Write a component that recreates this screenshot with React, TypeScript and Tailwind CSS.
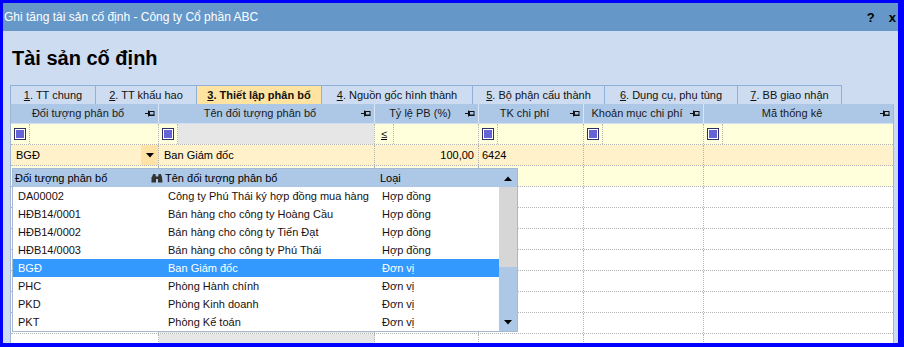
import React from "react";

const F = "font-['Liberation_Sans',Arial,sans-serif]";
const COLS = "grid grid-cols-[148px_216px_104px_105px_120px_189px]";

function Pin() {
  return (
    <svg width="10" height="7" viewBox="0 0 10 7" className="shrink-0">
      <path d="M0 3.5H3.5M3.5 0.5V6.5" stroke="#111" strokeWidth="1" />
      <rect x="4.5" y="1.5" width="4.5" height="3.5" fill="none" stroke="#111" strokeWidth="1" />
      <path d="M4 5.5H9.5" stroke="#111" strokeWidth="1" />
    </svg>
  );
}

function Check() {
  return (
    <div className="w-[12px] h-[12px] border border-[#2f2f66] bg-white p-[1px]">
      <div className="w-full h-full bg-[#6464d6]" />
    </div>
  );
}

function TriDown() {
  return (
    <svg width="8" height="5" viewBox="0 0 8 5">
      <path d="M0 0H8L4 4.5Z" fill="#000" />
    </svg>
  );
}
function TriUp() {
  return (
    <svg width="8" height="5" viewBox="0 0 8 5">
      <path d="M0 5H8L4 0.5Z" fill="#000" />
    </svg>
  );
}

function Binoculars() {
  return (
    <svg width="12" height="10" viewBox="0 0 12 10">
      <path d="M1 4L2.2 1H4.3L5 4V9.5H0.5V4Z" fill="#333" />
      <path d="M7 4L7.7 1H9.8L11 4L11.5 9.5H7Z" fill="#333" />
      <rect x="4.5" y="3.5" width="3" height="2.5" fill="#333" />
    </svg>
  );
}

const headers = [
  "Đối tượng phân bổ",
  "Tên đối tượng phân bổ",
  "Tỷ lệ PB (%)",
  "TK chi phí",
  "Khoản mục chi phí",
  "Mã thống kê",
];

const tabs: { n: string; t: string; w: string; active?: boolean }[] = [
  { n: "1", t: ". TT chung", w: "w-[85px]" },
  { n: "2", t: ". TT khấu hao", w: "w-[101px]" },
  { n: "3", t: ". Thiết lập phân bổ", w: "w-[125px]", active: true },
  { n: "4", t: ". Nguồn gốc hình thành", w: "w-[151px]" },
  { n: "5", t: ". Bộ phận cấu thành", w: "w-[132px]" },
  { n: "6", t: ". Dụng cụ, phụ tùng", w: "w-[133px]" },
  { n: "7", t: ". BB giao nhận", w: "w-[105px]" },
];

const items = [
  ["DA00002", "Công ty Phú Thái ký hợp đồng mua hàng", "Hợp đồng"],
  ["HĐB14/0001", "Bán hàng cho công ty Hoàng Cầu", "Hợp đồng"],
  ["HĐB14/0002", "Bán hàng cho công ty Tiến Đạt", "Hợp đồng"],
  ["HĐB14/0003", "Bán hàng cho công ty Phú Thái", "Hợp đồng"],
  ["BGĐ", "Ban Giám đốc", "Đơn vị"],
  ["PHC", "Phòng Hành chính", "Đơn vị"],
  ["PKD", "Phòng Kinh doanh", "Đơn vị"],
  ["PKT", "Phòng Kế toán", "Đơn vị"],
];

const cellB = "border-r border-dotted border-[#b4b4b4]";

function EmptyRow({ yellow }: { yellow?: boolean }) {
  return (
    <div className={`${COLS} h-[21px] shrink-0 border-b border-dotted border-[#b4b4b4] ${yellow ? "bg-[#ffffdc]" : "bg-white"}`}>
      <div className={cellB} />
      <div className={`${cellB} ${yellow ? "" : "bg-[#e6e6e6]"}`} />
      <div className={cellB} />
      <div className={cellB} />
      <div className={cellB} />
      <div />
    </div>
  );
}

export default function App() {
  return (
    <div className={`${F} w-[904px] h-[347px] bg-[#0000ff] pt-[3px] pl-[3px] pr-[6px] pb-[4px] overflow-hidden`}>
      <div className="w-full h-full flex flex-col bg-[#cddcf0]">
        {/* Title bar */}
        <div className="h-[28px] shrink-0 bg-[#6598c9] flex items-center pl-[1px] pr-[2px]">
          <span className="text-[12px] text-white leading-none">
            Ghi tăng tài sản cố định - Công ty Cổ phần ABC
          </span>
          <span className="ml-auto text-[13px] font-bold text-black leading-none mr-[14px]">?</span>
          <span className="text-[13px] font-bold text-black leading-none">x</span>
        </div>

        {/* Heading */}
        <div className="h-[54px] shrink-0 pl-[9px] pt-[15px]">
          <h1 className="text-[20px] font-bold leading-[24px] text-black">Tài sản cố định</h1>
        </div>

        {/* Tabs */}
        <div className="h-[19px] shrink-0 ml-[7px] flex">
          {tabs.map((tb, i) => (
            <div
              key={tb.n}
              className={`${tb.w} h-full border-t border-l ${i === tabs.length - 1 ? "border-r" : ""} border-[#8fb0d8] flex items-center justify-center text-[11px] text-[#111] ${
                tb.active ? "bg-[#ffe3a0] font-bold" : "bg-[#cddcf0]"
              }`}
            >
              <span>
                <span className="underline">{tb.n}</span>
                {tb.t}
              </span>
            </div>
          ))}
        </div>

        {/* Grid */}
        <div className="relative ml-[7px] w-[884px] flex-1 overflow-hidden border-x border-[#9fb6d6] bg-white flex flex-col text-[11px] text-black">
          {/* header */}
          <div className={`${COLS} h-[20px] shrink-0 bg-[#adc7e6] border-b border-[#d2e0f2]`}>
            {headers.map((h, i) => (
              <div key={h} className={`flex items-center pr-[3px] ${i < 5 ? "border-r border-[#d8e5f5]" : ""}`}>
                <span className="flex-1 text-center text-[#1a1a1a]">{h}</span>
                <Pin />
              </div>
            ))}
          </div>

          {/* filter row */}
          <div className={`${COLS} h-[21px] shrink-0 bg-[#ffffdc] border-b border-dotted border-[#b4b4b4]`}>
            {[0, 1, 2, 3, 4, 5].map((i) => (
              <div key={i} className={`flex ${i < 5 ? cellB : ""}`}>
                <div className="w-[19px] shrink-0 flex items-center justify-center border-r border-dotted border-[#b4b4b4]">
                  {i === 2 ? <span className="underline text-[11px] leading-none">≤</span> : <Check />}
                </div>
                <div className={`flex-1 ${i === 1 ? "bg-[#e6e6e6]" : ""}`} />
              </div>
            ))}
          </div>

          {/* editing row */}
          <div className={`${COLS} h-[21px] shrink-0 bg-[#fff1c9] border-b border-dotted border-[#b4b4b4]`}>
            <div className={`flex items-center ${cellB}`}>
              <span className="flex-1 pl-[5px]">BGĐ</span>
              <div className="w-[17px] h-full bg-[#ffe2a6] flex items-center justify-center">
                <TriDown />
              </div>
            </div>
            <div className={`flex items-center pl-[5px] ${cellB}`}>Ban Giám đốc</div>
            <div className={`flex items-center justify-end pr-[4px] ${cellB}`}>100,00</div>
            <div className={`flex items-center pl-[3px] ${cellB}`}>6424</div>
            <div className={cellB} />
            <div />
          </div>

          <EmptyRow yellow />
          {[0, 1, 2, 3, 4, 5, 6, 7].map((i) => (
            <EmptyRow key={i} />
          ))}

          {/* dropdown popup */}
          <div className="absolute left-[1px] top-[64px] w-[506px] h-[164px] border border-[#a7b9d1] bg-white flex">
            <div className="flex-1 flex flex-col">
              <div className="h-[18px] shrink-0 bg-[#adc7e6] flex items-center">
                <span className="w-[138px] pl-[2px]">Đối tượng phân bổ</span>
                <span className="w-[229px] flex items-center gap-[2px]">
                  <Binoculars />
                  <span>Tên đối tượng phân bổ</span>
                </span>
                <span className="flex-1">Loại</span>
              </div>
              {items.map((r) => {
                const sel = r[0] === "BGĐ";
                return (
                  <div
                    key={r[0]}
                    className={`h-[18px] shrink-0 flex items-center ${sel ? "bg-[#3399ff] text-white" : "text-[#1a1010]"}`}
                  >
                    <span className="w-[150px] pl-[5px]">{r[0]}</span>
                    <span className="w-[215px] pl-[5px]">{r[1]}</span>
                    <span className="flex-1 pl-[4px]">{r[2]}</span>
                  </div>
                );
              })}
            </div>
            {/* scrollbar */}
            <div className="w-[18px] shrink-0 flex flex-col bg-[#adc7e6]">
              <div className="h-[18px] shrink-0 flex items-center justify-center">
                <TriUp />
              </div>
              <div className="h-[80px] shrink-0 bg-[#d6d6d6]" />
              <div className="flex-1 flex items-end justify-center pb-[6px]">
                <TriDown />
              </div>
            </div>
          </div>
        </div>
      </div>
    </div>
  );
}
